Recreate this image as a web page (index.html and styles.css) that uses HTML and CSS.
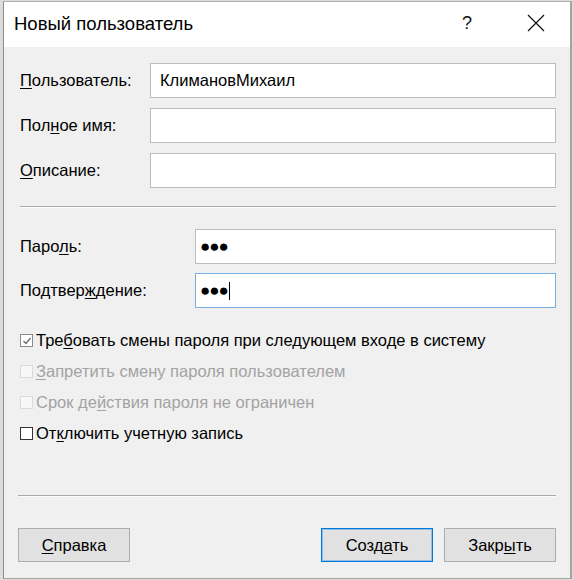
FILE: index.html
```html
<!DOCTYPE html>
<html lang="ru">
<head>
<meta charset="utf-8">
<title>Новый пользователь</title>
<link rel="stylesheet" href="styles.css">
</head>
<body>
<div class="window">
  <div class="titlebar">
    <span class="title">Новый пользователь</span>
    <span class="help">?</span>
    <span class="close">
      <svg width="18" height="18" viewBox="0 0 18 18"><path d="M1 1 L17 17 M17 1 L1 17" stroke="#111" stroke-width="1.2" fill="none"/></svg>
    </span>
  </div>
  <div class="content">
    <div class="grid grid-a">
      <label class="lbl"><u>П</u>ользователь:</label>
      <div class="field">КлимановМихаил</div>
      <label class="lbl">Пол<u>н</u>ое имя:</label>
      <div class="field"></div>
      <label class="lbl"><u>О</u>писание:</label>
      <div class="field"></div>
    </div>
    <div class="sep sep-1"></div>
    <div class="grid grid-b">
      <label class="lbl">Паро<u>л</u>ь:</label>
      <div class="field dots">&#9679;&#9679;&#9679;</div>
      <label class="lbl">Подтвер<u>ж</u>дение:</label>
      <div class="field dots focus">&#9679;&#9679;&#9679;<span class="caret"></span></div>
    </div>
    <div class="checks">
      <div class="chk">
        <span class="box checked"><svg width="10" height="10" viewBox="0 0 10 10"><path d="M1.5 5 L4 7.5 L8.5 2" stroke="#6a6a6a" stroke-width="1.2" fill="none"/></svg></span>
        <span>Тре<u>б</u>овать смены пароля при следующем входе в систему</span>
      </div>
      <div class="chk disabled">
        <span class="box"></span>
        <span><u>З</u>апретить смену пароля пользователем</span>
      </div>
      <div class="chk disabled">
        <span class="box"></span>
        <span>Срок де<u>й</u>ствия пароля не ограничен</span>
      </div>
      <div class="chk">
        <span class="box dark"></span>
        <span>От<u>к</u>лючить учетную запись</span>
      </div>
    </div>
    <div class="sep sep-2"></div>
    <div class="buttons">
      <button class="btn"><u>С</u>правка</button>
      <div class="spacer"></div>
      <button class="btn default">Созд<u>а</u>ть</button>
      <button class="btn">Закр<u>ы</u>ть</button>
    </div>
  </div>
</div>
</body>
</html>
```
FILE: styles.css
```css
html, body {
  margin: 0;
  padding: 0;
}
body {
  background: #dcdcdc;
  width: 573px;
  height: 580px;
  overflow: hidden;
  font-family: "Liberation Sans", Arial, sans-serif;
}
.window {
  margin: 1px 0 0 3px;
  width: 566px;
  height: 576px;
  border-left: 1px solid #8c8c8c;
  border-right: 2px solid #a3a3a3;
  border-top: 1px solid #b0b0b0;
  border-bottom: 1px solid #a3a3a3;
  background: #f0f0f0;
  display: flex;
  flex-direction: column;
}
.titlebar {
  height: 45px;
  background: #fff;
  display: flex;
  align-items: center;
  padding-left: 10px;
  flex: none;
}
.title {
  font-size: 18.5px;
  color: #000;
  flex: 1;
  padding-bottom: 2px;
}
.help {
  font-size: 18px;
  color: #111;
  width: 10px;
  padding-bottom: 3px;
}
.close {
  margin-left: 55px;
  margin-right: 25px;
  display: flex;
  padding-bottom: 3px;
}
.content {
  padding: 16px 14px 0 16px;
  font-size: 16.5px;
  color: #000;
}
u {
  text-decoration: underline;
  text-underline-offset: 2px;
  text-decoration-thickness: 1px;
}
.grid {
  display: grid;
  align-items: center;
  row-gap: 10px;
}
.grid-a {
  grid-template-columns: 130px 1fr;
}
.grid-b {
  grid-template-columns: 175px 1fr;
  row-gap: 9px;
}
.lbl {
  font-size: 16.5px;
}
.field {
  height: 33px;
  border: 1px solid #bdbdbd;
  background: #fff;
  display: flex;
  align-items: center;
  padding-left: 9px;
  font-size: 16.5px;
}
.field.focus {
  border-color: #7aaee0;
}
.dots {
  font-size: 17px;
  letter-spacing: -1px;
  padding-left: 4px;
}
.caret {
  display: inline-block;
  width: 1px;
  height: 18px;
  background: #000;
  margin-left: 1px;
}
.sep {
  height: 0;
  border-top: 1px solid #a9a9a9;
  border-bottom: 1px solid #fcfcfc;
}
.sep-1 {
  margin: 18px 0 21px 0;
}
.sep-2 {
  margin: 46px 0 31px -2px;
}
.checks {
  margin-top: 17px;
  display: flex;
  flex-direction: column;
}
.chk {
  height: 31px;
  display: flex;
  align-items: center;
  gap: 3px;
  font-size: 16.5px;
}
.chk.disabled {
  color: #a3a3a3;
}
.box {
  width: 11px;
  height: 11px;
  border: 1px solid #8a8a8a;
  background: #fff;
  display: flex;
  align-items: center;
  justify-content: center;
  flex: none;
}
.box.dark {
  border-color: #333;
}
.chk.disabled .box {
  border-color: #dadada;
  background: #f7f7f7;
}
.buttons {
  display: flex;
  gap: 11px;
  margin-left: -2px;
}
.spacer {
  flex: 1;
}
.btn {
  width: 112px;
  height: 34px;
  background: #e1e1e1;
  border: 1px solid #adadad;
  font-family: "Liberation Sans", Arial, sans-serif;
  font-size: 16.5px;
  color: #000;
  padding: 0;
  margin: 0;
}
.btn.default {
  border: 1px solid #0078d7;
  box-shadow: inset 0 0 0 1px #8fc0ec;
}
```
